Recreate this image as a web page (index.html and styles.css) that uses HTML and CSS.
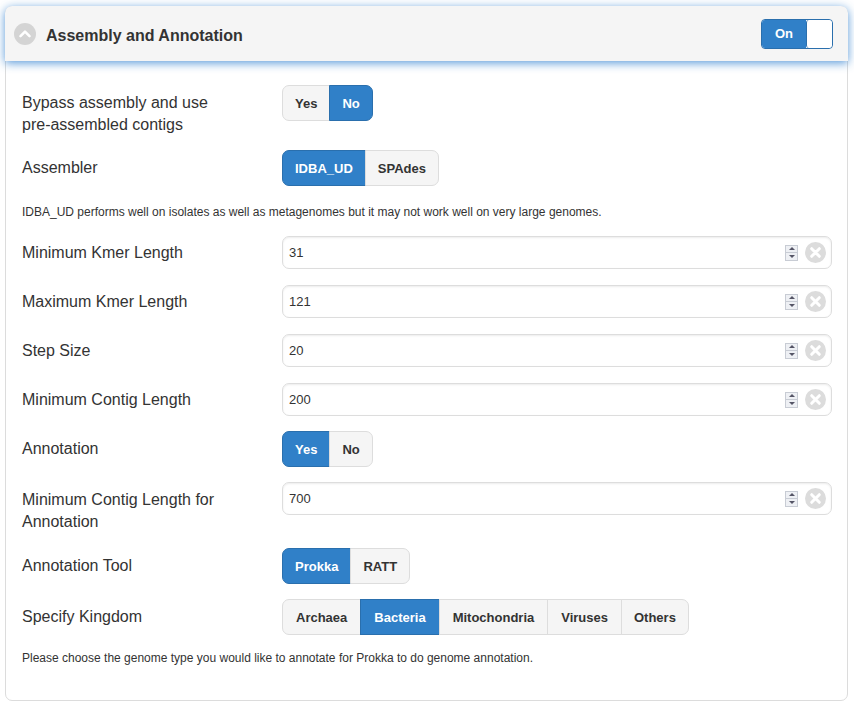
FILE: index.html
```html
<!DOCTYPE html>
<html>
<head>
<meta charset="utf-8">
<link rel="stylesheet" href="styles.css">
</head>
<body>
<div class="panel">
  <div class="panel-head">
    <span class="chev"><svg width="22" height="22" viewBox="0 0 22 22"><circle cx="11" cy="11" r="11" fill="#d4d4d4"/><path d="M6.5 13.2 L11 8.7 L15.5 13.2" fill="none" stroke="#fff" stroke-width="2.6" stroke-linecap="round" stroke-linejoin="round"/></svg></span>
    <span class="title">Assembly and Annotation</span>
    <span class="switch"><span class="on">On</span><span class="knob"></span></span>
  </div>
  <div class="panel-body">
    <div class="row r1">
      <div class="label">Bypass assembly and use<br>pre-assembled contigs</div>
      <div class="btns"><span class="btn">Yes</span><span class="btn active">No</span></div>
    </div>
    <div class="row r2">
      <div class="label">Assembler</div>
      <div class="btns"><span class="btn active">IDBA_UD</span><span class="btn">SPAdes</span></div>
    </div>
    <p class="help h1">IDBA_UD performs well on isolates as well as metagenomes but it may not work well on very large genomes.</p>
    <div class="row ri">
      <div class="label">Minimum Kmer Length</div>
      <div class="input"><span class="val">31</span><span class="spin"><i class="up"></i><i class="dn"></i></span><span class="clear"><svg width="21" height="21" viewBox="0 0 21 21"><circle cx="10.5" cy="10.5" r="10.5" fill="#dcdcdc"/><path d="M6.7 6.7 L14.3 14.3 M14.3 6.7 L6.7 14.3" stroke="#fff" stroke-width="3" stroke-linecap="round"/></svg></span></div>
    </div>
    <div class="row ri">
      <div class="label">Maximum Kmer Length</div>
      <div class="input"><span class="val">121</span><span class="spin"><i class="up"></i><i class="dn"></i></span><span class="clear"><svg width="21" height="21" viewBox="0 0 21 21"><circle cx="10.5" cy="10.5" r="10.5" fill="#dcdcdc"/><path d="M6.7 6.7 L14.3 14.3 M14.3 6.7 L6.7 14.3" stroke="#fff" stroke-width="3" stroke-linecap="round"/></svg></span></div>
    </div>
    <div class="row ri">
      <div class="label">Step Size</div>
      <div class="input"><span class="val">20</span><span class="spin"><i class="up"></i><i class="dn"></i></span><span class="clear"><svg width="21" height="21" viewBox="0 0 21 21"><circle cx="10.5" cy="10.5" r="10.5" fill="#dcdcdc"/><path d="M6.7 6.7 L14.3 14.3 M14.3 6.7 L6.7 14.3" stroke="#fff" stroke-width="3" stroke-linecap="round"/></svg></span></div>
    </div>
    <div class="row ri last">
      <div class="label">Minimum Contig Length</div>
      <div class="input"><span class="val">200</span><span class="spin"><i class="up"></i><i class="dn"></i></span><span class="clear"><svg width="21" height="21" viewBox="0 0 21 21"><circle cx="10.5" cy="10.5" r="10.5" fill="#dcdcdc"/><path d="M6.7 6.7 L14.3 14.3 M14.3 6.7 L6.7 14.3" stroke="#fff" stroke-width="3" stroke-linecap="round"/></svg></span></div>
    </div>
    <div class="row rb">
      <div class="label">Annotation</div>
      <div class="btns"><span class="btn active">Yes</span><span class="btn">No</span></div>
    </div>
    <div class="row ri2">
      <div class="label">Minimum Contig Length for<br>Annotation</div>
      <div class="input"><span class="val">700</span><span class="spin"><i class="up"></i><i class="dn"></i></span><span class="clear"><svg width="21" height="21" viewBox="0 0 21 21"><circle cx="10.5" cy="10.5" r="10.5" fill="#dcdcdc"/><path d="M6.7 6.7 L14.3 14.3 M14.3 6.7 L6.7 14.3" stroke="#fff" stroke-width="3" stroke-linecap="round"/></svg></span></div>
    </div>
    <div class="row rb">
      <div class="label">Annotation Tool</div>
      <div class="btns"><span class="btn active">Prokka</span><span class="btn">RATT</span></div>
    </div>
    <div class="row rk">
      <div class="label">Specify Kingdom</div>
      <div class="btns"><span class="btn">Archaea</span><span class="btn active">Bacteria</span><span class="btn">Mitochondria</span><span class="btn">Viruses</span><span class="btn">Others</span></div>
    </div>
    <p class="help h2">Please choose the genome type you would like to annotate for Prokka to do genome annotation.</p>
  </div>
</div>
</body>
</html>
```
FILE: styles.css
```css
html, body { margin: 0; padding: 0; background: #fff; }
body {
  font-family: "Liberation Sans", Arial, sans-serif;
  color: #333;
  padding: 6px 6px 0 5px;
  height: 706px;
  box-sizing: border-box;
}
.panel {
  border: 1px solid #dcdcdc;
  border-radius: 7px;
  height: 695px;
  box-sizing: border-box;
  background: #fff;
}
.panel-head {
  height: 55px;
  background: #f5f5f5;
  border-radius: 7px 7px 0 0;
  box-shadow: 0 2px 10px rgba(60, 135, 210, 0.85);
  display: flex;
  align-items: center;
  padding: 0 15px 0 9px;
  margin: -1px -1px 0 -1px;
  position: relative;
}
.chev { display: flex; width: 22px; height: 22px; margin-right: 10px; }
.title { font-weight: bold; font-size: 16px; color: #333; flex: 1; padding-top: 5px; }
.switch {
  display: flex;
  width: 72px;
  height: 30px;
  border: 1px solid #2a6fad;
  border-radius: 4px;
  box-sizing: border-box;
  overflow: hidden;
  background: #fff;
}
.switch .on {
  width: 44px;
  background: #3080c8;
  color: #fff;
  font-weight: bold;
  font-size: 13px;
  display: flex;
  align-items: center;
  justify-content: center;
}
.switch .knob {
  flex: 1;
  background: #fff;
  border-left: 1px solid #2a6fad;
  border-radius: 3px;
}
.panel-body { padding: 24px 15px 0 16px; }
.row { display: flex; align-items: flex-start; }
.label {
  width: 260px;
  flex: none;
  font-size: 16px;
  line-height: 22px;
  padding-top: 7px;
}
.r1 { margin-bottom: 14px; }
.btns { display: flex; }
.btn {
  height: 36px;
  box-sizing: border-box;
  display: flex;
  align-items: center;
  padding: 0 12px;
  font-size: 13px;
  font-weight: bold;
  color: #333;
  background: #f5f5f5;
  border: 1px solid #ddd;
  margin-left: -1px;
}
.btns .btn:first-child { border-radius: 7px 0 0 7px; margin-left: 0; }
.btns .btn:last-child { border-radius: 0 7px 7px 0; }
.rk .btn { padding: 0 13px; }
.rk .btn:last-child { padding: 0 12px; }
.btn.active { background: #3080c8; border-color: #2a6fad; color: #fff; }
.help {
  margin: 0;
  font-size: 12px;
  line-height: 17px;
  color: #333;
}
.h1 { margin: 18px 0 15px 0; }
.h2 { margin: 15px 0 0 0; }
.ri { margin-bottom: 16px; }
.ri.last { margin-bottom: 15px; }
.ri .label { padding-top: 6px; }
.input {
  flex: 1;
  height: 33px;
  box-sizing: border-box;
  border: 1px solid #ddd;
  border-radius: 7px;
  box-shadow: inset 0 1px 2px rgba(0,0,0,0.08);
  display: flex;
  align-items: center;
  padding: 0 5px 0 6px;
  font-size: 13px;
  color: #333;
}
.val { flex: 1; }
.spin {
  width: 13px;
  height: 16px;
  display: flex;
  flex-direction: column;
  margin-right: 7px;
  background: #eef0f4;
  border: 1px solid #c8ccd4;
  box-sizing: border-box;
}
.spin i { flex: 1; display: flex; align-items: center; justify-content: center; }
.spin i.up { border-bottom: 1px solid #c8ccd4; }
.spin i.up::after {
  content: ""; border-left: 3px solid transparent; border-right: 3px solid transparent;
  border-bottom: 3px solid #556;
}
.spin i.dn::after {
  content: ""; border-left: 3px solid transparent; border-right: 3px solid transparent;
  border-top: 3px solid #556;
}
.clear { display: flex; }
.rb { margin-bottom: 15px; }
.ri2 { margin-bottom: 15px; }
```
